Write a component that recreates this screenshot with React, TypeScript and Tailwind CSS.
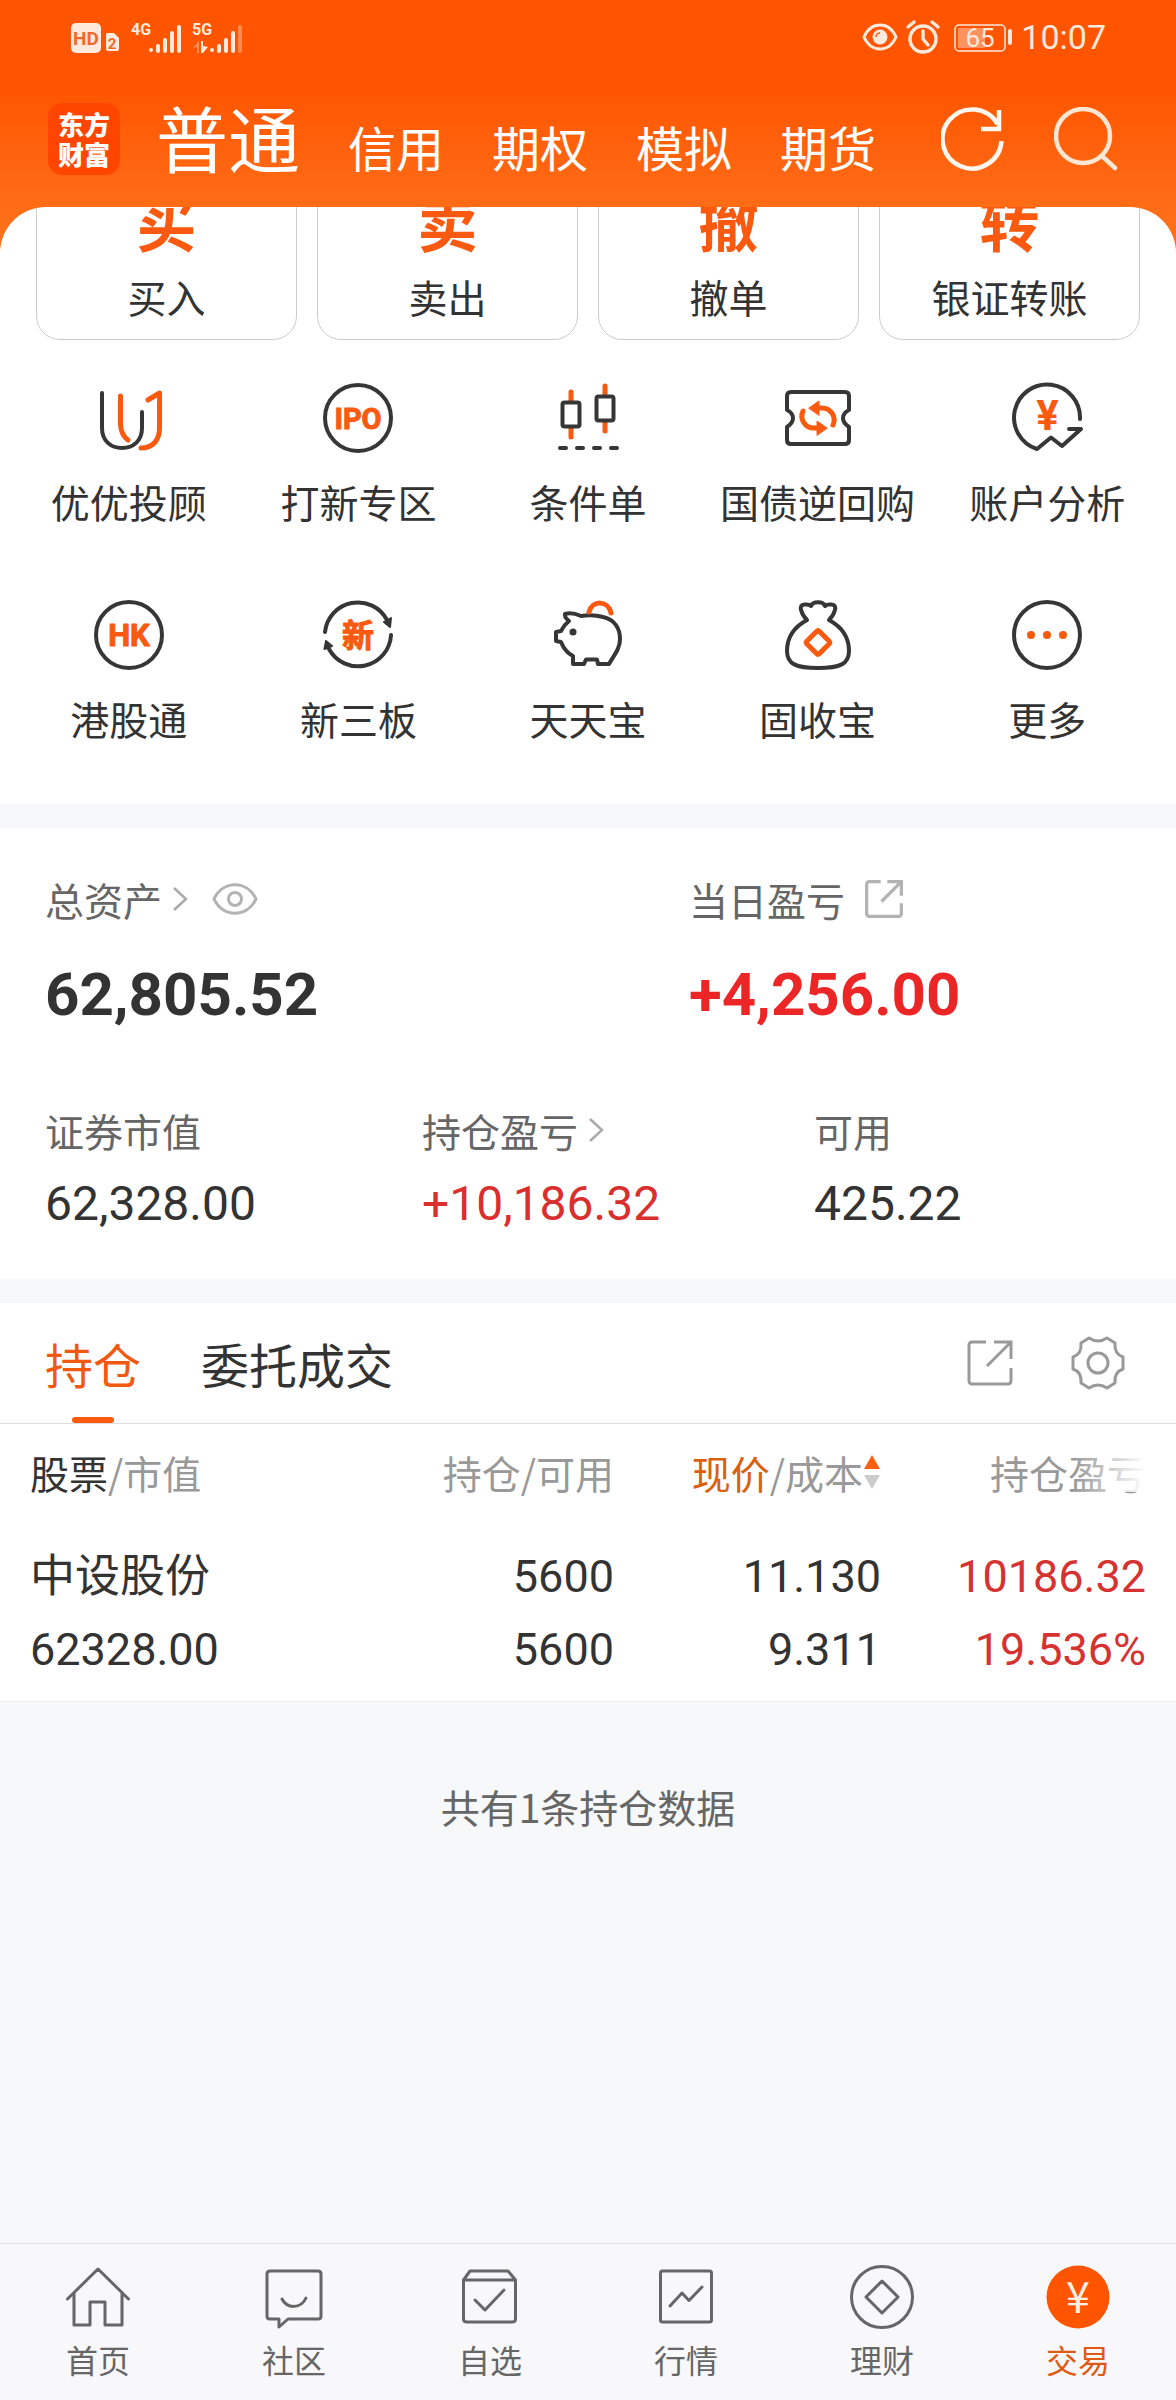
import { useState } from 'react';

const DARK = '#363636';
const ORANGE = '#fa5a0f';

const StatusBar = () => (
  <div className="flex h-[74px] items-center justify-between pl-[70px] pr-[70px]">
    <svg width="176" height="36" viewBox="0 0 176 36" fill="#ffe9dc" className="font-['Roboto'] font-bold">
      <rect x="1" y="4" width="30" height="30" rx="5" />
      <text x="16" y="26" fontSize="19" fill="#ee6a2c" textAnchor="middle">HD</text>
      <path d="M37 14h7l5 5v11a2 2 0 0 1-2 2H38a2 2 0 0 1-2-2V15z" />
      <text x="42" y="30" fontSize="15" fill="#ee6a2c" textAnchor="middle">2</text>
      <text x="61" y="16" fontSize="16">4G</text>
      <path d="M81 31v0M88 27v5M95 21v11M102 14v18M109 8v24" stroke="#ffe9dc" strokeWidth="4" strokeLinecap="round" />
      <text x="122" y="16" fontSize="16">5G</text>
      <path d="M123 29l6-7v12h-2v-6z" opacity=".4" />
      <path d="M131 22h2v5l5 1-5 6h-2z" />
      <path d="M142 31v0M149 27v5M156 21v11M163 14v18" stroke="#ffe9dc" strokeWidth="4" strokeLinecap="round" />
      <path d="M170 8v24" stroke="#ff8a4d" strokeWidth="4" strokeLinecap="round" />
    </svg>
    <div className="flex items-center gap-2 text-[#ffe9dc]">
      <svg width="152" height="36" viewBox="0 0 152 36" fill="none" stroke="#ffe9dc" strokeWidth="3">
        <path d="M3 18C10 2 28 2 35 18C28 34 10 34 3 18z" />
        <circle cx="19" cy="18" r="6" fill="#ffe9dc" />
        <path d="M15 18a4 4 0 0 1 4-4" stroke="#ff5500" strokeWidth="1.5" />
        <circle cx="62" cy="20" r="13" strokeWidth="3.4" />
        <path d="M62 12v8l5 6M47 8l6-5M77 8l-6-5" strokeWidth="3.4" strokeLinecap="round" />
        <rect x="94" y="6" width="50" height="26" rx="4" strokeWidth="1.5" />
        <rect x="97" y="9" width="27" height="20" fill="#ff925e" stroke="none" />
        <path d="M149 12v12" strokeWidth="4" strokeLinecap="round" />
        <text x="119" y="28" fontSize="26" fill="#ffe9dc" stroke="none" textAnchor="middle" className="font-['Roboto']">65</text>
      </svg>
      <span className="font-['Roboto'] text-[34px] leading-10">10:07</span>
    </div>
  </div>
);

const Header = ({ tab, setTab }: any) => (
  <header className="bg-linear-to-b from-[#ff5500] from-35% to-[#ff7019] to-90% pb-[78px]">
    <StatusBar />
    <div className="flex items-center pl-12 pr-[58px] pt-[29px]">
      <div className="flex size-[72px] items-center justify-center rounded-[14px] bg-[#ff4500]">
        <p className="w-[52px] text-[26px] font-black leading-[30px] text-white">东方财富</p>
      </div>
      <nav className="ml-9 flex items-baseline gap-12 self-start text-white">
        {['普通', '信用', '期权', '模拟', '期货'].map((name) => (
          <button
            key={name}
            onClick={() => setTab(name)}
            className={tab === name ? 'text-[72px] leading-[66px]' : 'text-[48px] leading-[40px]'}
          >
            {name}
          </button>
        ))}
      </nav>
      <div className="ml-auto flex gap-[49px]">
        <button aria-label="刷新">
          <svg width="64" height="64" viewBox="0 0 64 64" fill="none" stroke="#fff6ee" strokeWidth="4.5">
            <path d="M60.5 34A29.5 29.5 0 1 1 56.5 17" />
            <path d="M58 3v19H40" />
          </svg>
        </button>
        <button aria-label="搜索">
          <svg width="64" height="64" viewBox="0 0 64 64" fill="none" stroke="#ffe6d2" strokeWidth="4.5">
            <circle cx="29" cy="29" r="27" />
            <path d="M48 49L61 61" strokeLinecap="round" />
          </svg>
        </button>
      </div>
    </div>
  </header>
);

const tradeActions = [
  { mark: '买', label: '买入' },
  { mark: '卖', label: '卖出' },
  { mark: '撤', label: '撤单' },
  { mark: '转', label: '银证转账' },
];

const shortcuts = [
  {
    label: '优优投顾',
    icon: (
      <>
        <path d="M9 11V46C9 59 18 66 29 66S49 59 49 46V30" />
        <path d="M27.5 14V42Q28 53 35 58M48 66C60 66 66.5 58 66.5 46V11L55 18" stroke={ORANGE} strokeWidth="5" />
      </>
    ),
  },
  {
    label: '打新专区',
    icon: (
      <>
        <circle cx="36" cy="36" r="33" />
        <text x="36" y="46.5" fontSize="29" fill={ORANGE} stroke={ORANGE} strokeWidth="1" textAnchor="middle">IPO</text>
      </>
    ),
  },
  {
    label: '条件单',
    icon: (
      <>
        <path d="M19 10V19M19 46V55M53 4V13M53 40V49" stroke={ORANGE} strokeWidth="5" />
        <rect x="10.5" y="20.5" width="17" height="24" rx="2" />
        <rect x="44.5" y="14.5" width="17" height="24" rx="2" />
        <path d="M8 66h6M25 66h6M42 66h6M59 66h6" />
      </>
    ),
  },
  {
    label: '国债逆回购',
    icon: (
      <>
        <path d="M9 10H63Q67 10 67 14V28Q61 31 61 36T67 45V58Q67 62 63 62H9Q5 62 5 58V45Q11 41 11 36T5 28V14Q5 10 9 10z" />
        <path d="M35 26H40A12 12 0 0 1 51 43" stroke={ORANGE} strokeWidth="5" />
        <path d="M27 26L37 19V33z" fill={ORANGE} stroke={ORANGE} strokeWidth="1" />
        <path d="M37 46H32A12 12 0 0 1 21 29" stroke={ORANGE} strokeWidth="5" />
        <path d="M45 46L35 39V53z" fill={ORANGE} stroke={ORANGE} strokeWidth="1" />
      </>
    ),
  },
  {
    label: '账户分析',
    icon: (
      <>
        <path d="M69 37A33 33 0 1 0 26 67L40 55.5L51 64L70 47H58" />
        <text x="36.5" y="48" fontSize="42" fill={ORANGE} stroke="none" textAnchor="middle">¥</text>
      </>
    ),
  },
  {
    label: '港股通',
    icon: (
      <>
        <circle cx="36" cy="36" r="33" />
        <text x="36" y="47" fontSize="31" fill={ORANGE} stroke={ORANGE} strokeWidth="1" textAnchor="middle">HK</text>
      </>
    ),
  },
  {
    label: '新三板',
    icon: (
      <>
        <path d="M3 33A33 33 0 0 1 65 21M69 36A33 33 0 0 1 7 50" />
        <path d="M62 23L69 19L68 28zM4 42L2.5 50L10 47z" fill={DARK} strokeWidth="2" />
        <text x="36" y="48" fontSize="32" fill={ORANGE} stroke={ORANGE} strokeWidth="1" textAnchor="middle">新</text>
      </>
    ),
  },
  {
    label: '天天宝',
    icon: (
      <>
        <path d="M13 15Q20 13 29 17C36 16 44 16 51 18C62 20 68 29 68 40C68 50 62 56 57 65H46L45 60.5H34L32 65H21V57Q13 53 9 43L4 42V33L9 32Q12 26 17 22Q12 18 13 15z" />
        <circle cx="21" cy="33" r="3.5" fill={DARK} stroke="none" />
        <path d="M37 13C40 1 56 1 59 14" stroke={ORANGE} strokeWidth="5" />
      </>
    ),
  },
  {
    label: '固收宝',
    icon: (
      <>
        <path d="M25 21C12 28 5 38 5 52C5 65 14 69 36 69S67 65 67 52C67 38 60 28 47 21C52 16 57 5 49 5.5Q45 5 43 7C41 2 31 2 29 7Q27 5 23 5.5C15 5 20 16 25 21" />
        <path d="M34.5 32.5Q36 31 37.5 32.5L47 42Q48.5 43.5 47 45L37.5 54.5Q36 56 34.5 54.5L25 45Q23.5 43.5 25 42z" stroke={ORANGE} strokeWidth="5" />
      </>
    ),
  },
  {
    label: '更多',
    icon: (
      <>
        <circle cx="36" cy="36" r="33" />
        <path d="M20 36h0M36 36h0M52 36h0" stroke={ORANGE} strokeWidth="8" />
      </>
    ),
  },
];

const Chevron = () => (
  <svg width="16" height="26" viewBox="0 0 16 26" fill="none" stroke="#aaa" strokeWidth="2.5">
    <path d="M2 2L14 13L2 24" />
  </svg>
);

const ShareIcon = ({ size, color, stroke }: any) => (
  <svg width={size} height={size} viewBox="0 0 46 46" fill="none" stroke={color} strokeWidth={stroke}>
    <path d="M19 2H5a3 3 0 0 0-3 3V41a3 3 0 0 0 3 3H41a3 3 0 0 0 3-3V28" />
    <path d="M27 2H44V19M44 2L20 26" />
  </svg>
);

const Assets = () => (
  <section className="bg-white px-[45px] pb-[51px] pt-[51px]">
    <div className="grid grid-cols-[644fr_442fr]">
      <div>
        <div className="flex h-10 items-center text-[39px] leading-10 text-[#666]">
          总资产
          <span className="ml-[10px]"><Chevron /></span>
          <button aria-label="隐藏金额" className="ml-6">
            <svg width="46" height="32" viewBox="0 0 46 32" fill="none" stroke="#b3b3b3" strokeWidth="3">
              <path d="M2 16C11 -3 35 -3 44 16C35 35 11 35 2 16z" />
              <circle cx="23" cy="16" r="6.5" />
            </svg>
          </button>
        </div>
        <div className="mt-[46px] font-['Roboto'] text-[60px] font-bold leading-[60px] text-[#333]">62,805.52</div>
      </div>
      <div>
        <div className="flex h-10 items-center text-[39px] leading-10 text-[#666]">
          当日盈亏
          <button aria-label="分享盈亏" className="ml-5"><ShareIcon size={38} color="#b3b3b3" stroke={4} /></button>
        </div>
        <div className="mt-[46px] font-['Roboto'] text-[60px] font-bold leading-[60px] text-[#ec2626]">+4,256.00</div>
      </div>
    </div>
    <div className="mt-[85px] grid grid-cols-[377fr_392fr_317fr]">
      <div>
        <div className="text-[39px] leading-10 text-[#666]">证券市值</div>
        <div className="mt-[30px] font-['Roboto'] text-[48px] leading-[48px] text-[#333]">62,328.00</div>
      </div>
      <div>
        <div className="flex h-10 items-center text-[39px] leading-10 text-[#666]">
          持仓盈亏
          <span className="ml-[10px]"><Chevron /></span>
        </div>
        <div className="mt-[30px] font-['Roboto'] text-[48px] leading-[48px] text-[#d92f2f]">+10,186.32</div>
      </div>
      <div>
        <div className="text-[39px] leading-10 text-[#666]">可用</div>
        <div className="mt-[30px] font-['Roboto'] text-[48px] leading-[48px] text-[#333]">425.22</div>
      </div>
    </div>
  </section>
);

const positions = [
  { name: '中设股份', value: '62328.00', hold: '5600', usable: '5600', price: '11.130', cost: '9.311', profit: '10186.32', rate: '19.536%' },
];

const Positions = () => {
  const [active, setActive] = useState('持仓');
  return (
    <section className="border-b border-[#ececee] bg-white">
      <div className="flex h-[121px] items-center justify-between border-b border-[#dcdcdc] pl-[45px] pr-[51px]">
        <div className="flex h-full gap-[60px]">
          {['持仓', '委托成交'].map((name) => (
            <button
              key={name}
              onClick={() => setActive(name)}
              className={
                active === name
                  ? 'relative h-full text-[48px] leading-[60px] text-[#f0590f]'
                  : 'relative h-full text-[48px] leading-[60px] text-[#333]'
              }
            >
              {name}
              {active === name && (
                <span className="absolute bottom-0 left-1/2 h-[6px] w-[42px] -translate-x-1/2 rounded-full bg-[#fa5a0f]"></span>
              )}
            </button>
          ))}
        </div>
        <div className="flex items-center gap-[58px]">
          <button aria-label="分享持仓"><ShareIcon size={46} color="#999" stroke={3} /></button>
          <button aria-label="设置">
            <svg width="54" height="54" viewBox="0 0 54 54" fill="none" stroke="#999" strokeWidth="3" strokeLinejoin="round">
              <path d="M18 2Q27 8 36 2L44 7Q43 18 52 21V33Q43 36 44 47L36 52Q27 46 18 52L10 47Q11 36 2 33V21Q11 18 10 7z" />
              <circle cx="27" cy="27" r="10" />
            </svg>
          </button>
        </div>
      </div>
      <table className="w-full table-fixed">
        <thead>
          <tr className="h-[96px] text-right text-[39px] leading-10 text-[#999]">
            <th className="pl-[30px] text-left font-normal"><span className="text-[#333]">股票</span>/市值</th>
            <th className="w-[295px] font-normal">持仓/可用</th>
            <th className="w-[267px] font-normal">
              <button className="inline-flex items-center whitespace-nowrap">
                <span className="text-[#d9600f]">现价</span>/成本
                <svg width="18" height="36" viewBox="0 0 18 36">
                  <path d="M9 1L17 15H1z" fill="#fa6010" />
                  <path d="M9 35L17 21H1z" fill="#ccc" />
                </svg>
              </button>
            </th>
            <th className="w-[295px] pr-[30px] font-normal">
              <span className="relative inline-block">
                持仓盈亏
                <span className="absolute inset-y-0 right-0 w-[72px] bg-linear-to-r from-transparent to-white"></span>
              </span>
            </th>
          </tr>
        </thead>
        <tbody>
          {positions.map((item) => (
            <tr key={item.name} className="text-right font-['Roboto','Noto_Sans_CJK_SC'] text-[45px] leading-[73px] text-[#333]">
              <td className="pb-[15px] pl-[30px] pt-5 text-left">
                <div>{item.name}</div>
                <div>{item.value}</div>
              </td>
              <td className="pb-[15px] pt-5">
                <div>{item.hold}</div>
                <div>{item.usable}</div>
              </td>
              <td className="pb-[15px] pt-5">
                <div>{item.price}</div>
                <div>{item.cost}</div>
              </td>
              <td className="pb-[15px] pr-[30px] pt-5 text-[#d63232]">
                <div>{item.profit}</div>
                <div>{item.rate}</div>
              </td>
            </tr>
          ))}
        </tbody>
      </table>
    </section>
  );
};

const navItems = [
  { label: '首页', icon: <path d="M1.5 34L32 4L62.5 34M8 28V60H24V37H39V60H56V28" /> },
  {
    label: '社区',
    icon: (
      <>
        <path d="M8 6H56Q59 6 59 9V51Q59 54 56 54H26L17 62V54H8Q5 54 5 51V9Q5 6 8 6z" />
        <path d="M20 34C25 44 39 44 44 33" />
      </>
    ),
  },
  {
    label: '自选',
    icon: (
      <>
        <path d="M5.5 15L12 6H50L57.5 15V54Q57.5 57 54 57H9Q5.5 57 5.5 54V15H57.5" />
        <path d="M17 35L27 45L46 25" />
      </>
    ),
  },
  {
    label: '行情',
    icon: (
      <>
        <rect x="6.5" y="6" width="51" height="51" rx="2" />
        <path d="M16 41L28 28L35 35.5L48 22" />
      </>
    ),
  },
  {
    label: '理财',
    icon: (
      <>
        <circle cx="32" cy="32" r="30.5" />
        <path d="M32 16L48 32L32 48L16 32z" />
      </>
    ),
  },
  {
    label: '交易',
    active: true,
    icon: (
      <>
        <circle cx="32" cy="32" r="31.5" fill="#ff5500" stroke="none" />
        <text x="32" y="48" fontSize="43" fill="#fff0e4" stroke="none" textAnchor="middle">¥</text>
      </>
    ),
  },
];

const BottomNav = () => (
  <nav className="mt-auto grid grid-cols-6 border-t border-[#e2e2e4] bg-[#f8f8fa] pb-[21px] pt-[21px]">
    {navItems.map((item) => (
      <a key={item.label} href="#" className="flex flex-col items-center gap-[10px]">
        <svg width="64" height="64" viewBox="0 0 64 64" fill="none" stroke="#666" strokeWidth="3" strokeLinecap="round" strokeLinejoin="round" className="font-['Noto_Sans_CJK_SC'] font-normal">
          {item.icon}
        </svg>
        <span className={item.active ? 'text-[32px] leading-10 text-[#e05a15]' : 'text-[32px] leading-10 text-[#666]'}>
          {item.label}
        </span>
      </a>
    ))}
  </nav>
);

export default function App() {
  const [tab, setTab] = useState('普通');

  return (
    <div className="flex min-h-screen flex-col bg-[#f7f8fa] font-['Noto_Sans_CJK_SC',sans-serif]">
      <Header tab={tab} setTab={setTab} />
      <main className="-mt-[46px] flex flex-col gap-6">
        {/* the action cards are scrolled partly under the header */}
        <section className="overflow-hidden rounded-t-[46px] bg-white pb-[66px]">
          <div className="-mt-[41px] grid grid-cols-4 gap-5 px-9">
            {tradeActions.map((item) => (
              <button key={item.label} className="flex flex-col items-center rounded-[24px] border border-[#ccc] pb-[23px] pt-6">
                <span className="text-[60px] font-bold leading-[60px] text-[#fa5a0f]">{item.mark}</span>
                <span className="mt-[25px] text-[39px] leading-10 text-[#333]">{item.label}</span>
              </button>
            ))}
          </div>
          <div className="mt-[42px] grid grid-cols-5 gap-y-[78px] px-[14px]">
            {shortcuts.map((item) => (
              <a key={item.label} href="#" className="flex flex-col items-center gap-[27px]">
                <svg width="72" height="72" viewBox="0 0 72 72" fill="none" stroke={DARK} strokeWidth="4" strokeLinecap="round" strokeLinejoin="round" className="font-['Roboto','Noto_Sans_CJK_SC'] font-bold">
                  {item.icon}
                </svg>
                <span className="whitespace-nowrap text-[39px] leading-10 text-[#333]">{item.label}</span>
              </a>
            ))}
          </div>
        </section>
        <Assets />
        <Positions />
      </main>
      <p className="pb-10 pt-[84px] text-center text-[39px] leading-10 text-[#666]">共有1条持仓数据</p>
      <BottomNav />
    </div>
  );
}
